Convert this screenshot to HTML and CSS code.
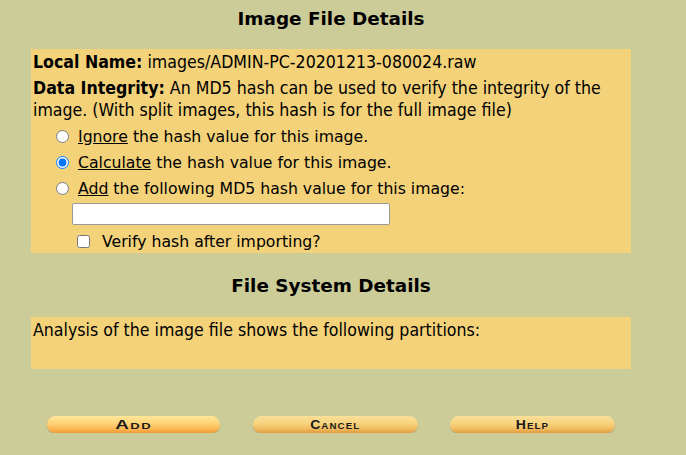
FILE: index.html
```html
<!DOCTYPE html>
<html>
<head>
<meta charset="utf-8">
<link rel="stylesheet" href="styles.css">
</head>
<body>
<div class="page">
  <h2 class="title">Image File Details</h2>
  <div class="panel panel-top">
    <p class="line first"><b>Local Name:</b> images/ADMIN-PC-20201213-080024.raw</p>
    <p class="line"><b>Data Integrity:</b> An MD5 hash can be used to verify the integrity of the image. (With split images, this hash is for the full image file)</p>
    <div class="options">
      <label class="opt"><input type="radio" name="h"><span><u>Ignore</u> the hash value for this image.</span></label>
      <label class="opt"><input type="radio" name="h" checked><span><u>Calculate</u> the hash value for this image.</span></label>
      <label class="opt"><input type="radio" name="h"><span><u>Add</u> the following MD5 hash value for this image:</span></label>
      <input class="hash" type="text">
      <label class="chk"><input type="checkbox"><span>Verify hash after importing?</span></label>
    </div>
  </div>
  <h2 class="title title2">File System Details</h2>
  <div class="panel panel-bottom">
    <p class="line">Analysis of the image file shows the following partitions:</p>
  </div>
  <div class="buttons">
    <span class="btn btn-add"><span class="btn-label">Add</span></span>
    <span class="btn"><span class="btn-label">Cancel</span></span>
    <span class="btn"><span class="btn-label">Help</span></span>
  </div>
</div>
</body>
</html>
```
FILE: styles.css
```css
html, body {
  margin: 0;
  padding: 0;
  background: #cccc99;
}
body {
  font-family: "DejaVu Sans", sans-serif;
  color: #000;
}
.page {
  width: 600px;
  margin-left: 31px;
}
.title {
  font-family: "DejaVu Sans", sans-serif;
  font-size: 18.4px;
  line-height: 22px;
  font-weight: bold;
  text-align: center;
  margin: 0;
  padding-top: 8px;
  height: 49px;
  box-sizing: border-box;
}
.title2 {
  height: 64px;
  padding-top: 22px;
}
.panel {
  background: #f3d27a;
}
.panel-top {
  height: 204px;
  padding: 2px 2px 0 2px;
  box-sizing: border-box;
}
.panel-bottom {
  height: 52px;
  padding: 2px 2px 0 2px;
  box-sizing: border-box;
}
.line {
  font-family: "DejaVu Sans Condensed", "DejaVu Sans", sans-serif;
  font-stretch: condensed;
  font-size: 17.6px;
  line-height: 22px;
  margin: 0;
}
.line.first {
  margin-bottom: 4px;
}
.options {
  margin-top: 2px;
  padding-left: 21px;
  font-size: 15.7px;
}
.opt {
  display: flex;
  align-items: center;
  height: 26px;
}
.opt input {
  margin: 0 9px 0 2px;
  width: 13px;
  height: 13px;
  flex-shrink: 0;
}
.hash {
  display: block;
  margin: 2px 0 0 18px;
  width: 318px;
  height: 22px;
  box-sizing: border-box;
  border: 1px solid #9a9a9a;
  border-radius: 2px;
  background: #fff;
}
.chk {
  display: flex;
  align-items: center;
  height: 24px;
  margin-top: 4px;
}
.chk input {
  margin: 0 12px 0 23px;
  width: 13px;
  height: 13px;
  flex-shrink: 0;
}
.buttons {
  display: flex;
  gap: 32px;
  margin-top: 47px;
  margin-left: 16px;
}
.btn {
  display: flex;
  justify-content: center;
  flex-shrink: 0;
  width: 165px;
  height: 17px;
  border-radius: 9px;
  background: linear-gradient(#fbe09a 0%, #f7d27c 45%, #f0bd62 75%, #e49a3e 100%);
  box-shadow: 0 1px 1px rgba(140,110,50,0.45);
  font-family: "Liberation Sans", Arial, sans-serif;
  font-weight: bold;
  font-variant: small-caps;
  font-size: 13px;
  letter-spacing: 1px;
  line-height: 18px;
  color: #1a1a1a;
}
.btn-label {
  display: inline-block;
  transform: scaleX(1.08);
}
.btn-add {
  width: 173px;
  margin-right: 1px;
  background: linear-gradient(#ffe69a 0%, #ffd275 45%, #fcb955 75%, #f39a36 100%);
}
.btn-add .btn-label {
  transform: scaleX(1.45);
}
```
